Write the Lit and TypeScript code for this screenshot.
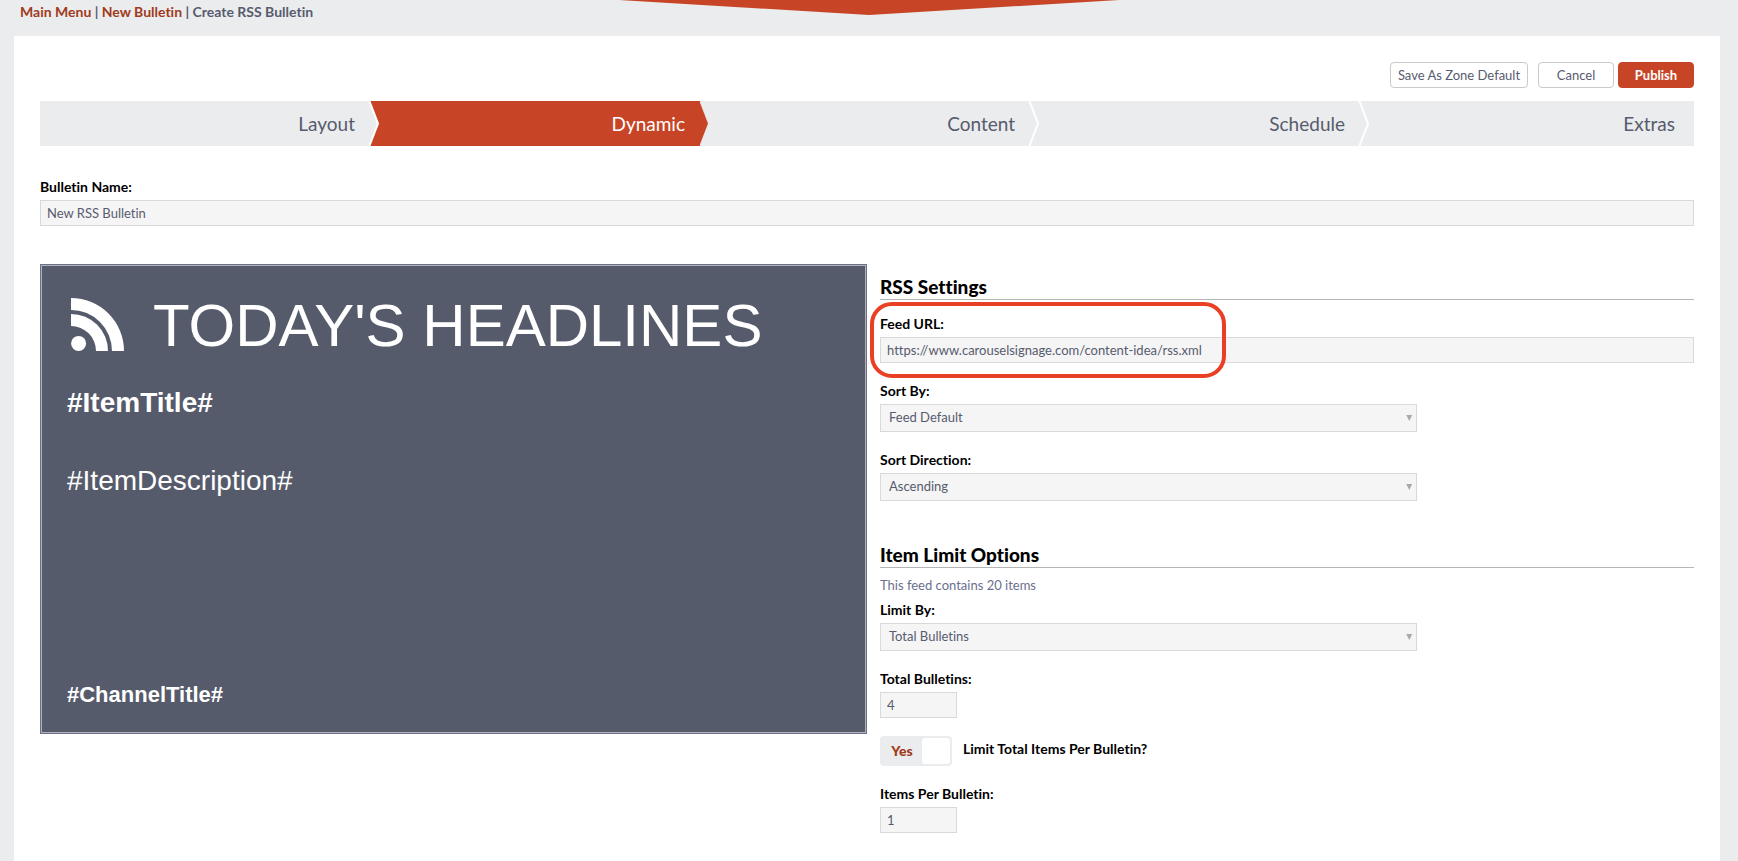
import { LitElement, html, css } from "lit";
import { customElement, property, state } from "lit/decorators.js";

@customElement("step-bar")
class StepBar extends LitElement {
  @property({ attribute: false }) steps: string[] = [];
  @property() current = "";

  static styles = css`
    :host {
      display: block;
    }
    .steps {
      display: flex;
      margin: 0;
      padding: 0;
      list-style: none;
      background: #ebeced;
    }
    .step {
      position: relative;
      display: flex;
      flex: 1 1 0;
    }
    .step:last-child {
      padding-right: 4px;
    }
    .link {
      flex: 1;
      padding-right: 15px;
      line-height: 45px;
      font-size: 19px;
      text-align: right;
      text-decoration: none;
      color: #575b6e;
    }
    .current {
      background: #c74526;
      color: #fff;
    }
    .arrow {
      position: absolute;
      left: 100%;
      top: 0;
      z-index: 1;
      width: 14px;
      height: 100%;
      margin-left: -4px;
      fill: #ebeced;
      stroke: #fff;
      stroke-width: 2;
    }
    .arrow.solid {
      fill: #c74526;
      stroke: none;
    }
  `;

  render() {
    return html`<ol class="steps">
      ${this.steps.map((name, i) => {
        const on = name === this.current;
        return html`<li class="step">
          <a class="link ${on ? "current" : ""}" href="#">${name}</a>
          ${i < this.steps.length - 1
            ? html`<svg class="arrow ${on ? "solid" : ""}" viewBox="-4 0 14 45" preserveAspectRatio="none" aria-hidden="true">
                <path d="M-1 -1L8 22.5L-1 46" />
              </svg>`
            : ""}
        </li>`;
      })}
    </ol>`;
  }
}

@customElement("bulletin-preview")
class BulletinPreview extends LitElement {
  static styles = css`
    :host {
      display: block;
    }
    .slide {
      box-sizing: border-box;
      display: flex;
      flex-direction: column;
      aspect-ratio: 827 / 470;
      padding: 24px;
      border: 1px solid #6b6f8e;
      box-shadow: inset 0 0 0 1px #b0b2b6;
      background: #565b6b;
      color: #fff;
      font-family: "Liberation Sans", Arial, sans-serif;
    }
    .head {
      display: flex;
      align-items: center;
      gap: 29px;
      padding-left: 6px;
    }
    .icon {
      flex: none;
      width: 53px;
      height: 53px;
      margin-bottom: 3px;
      fill: #fff;
    }
    .title {
      margin: 0;
      font-size: 60px;
      line-height: 74px;
      font-weight: 400;
      white-space: nowrap;
    }
    .line {
      margin: 0;
      padding-left: 2px;
      font-size: 28px;
      line-height: 32px;
    }
    .item {
      margin-top: 24px;
      font-weight: 700;
    }
    .description {
      margin-top: 46px;
    }
    .channel {
      margin-top: auto;
      font-size: 22px;
      line-height: 28px;
      font-weight: 700;
    }
  `;

  render() {
    return html`<section class="slide">
      <div class="head">
        <svg class="icon" viewBox="0 0 53 53" aria-hidden="true">
          <circle cx="7.6" cy="45.4" r="7.5" />
          <path d="M0 16A37 37 0 0 1 37 53H25A25 25 0 0 0 0 28Z" />
          <path d="M0 0A53 53 0 0 1 53 53H41A41 41 0 0 0 0 12Z" />
        </svg>
        <h1 class="title">TODAY'S HEADLINES</h1>
      </div>
      <p class="line item">#ItemTitle#</p>
      <p class="line description">#ItemDescription#</p>
      <p class="line channel">#ChannelTitle#</p>
    </section>`;
  }
}

@customElement("app-root")
class AppRoot extends LitElement {
  @state() limitItems = true;

  static styles = css`
    :host {
      display: flex;
      flex-direction: column;
      min-height: 100vh;
      background: #ebeced;
      color: #575b6e;
      font-family: Lato, sans-serif;
      font-size: 14px;
      line-height: 20px;
      font-variant-ligatures: none;
    }
    .top {
      position: relative;
      padding: 2px 20px 14px;
      font-weight: 700;
    }
    .crumb {
      color: #a03a20;
      text-decoration: none;
    }
    .tab {
      position: absolute;
      top: 0;
      left: 50%;
      margin-left: -250px;
      width: 500px;
      height: 15px;
      background: #c74526;
      clip-path: polygon(0 0, 100% 0, 50% 100%);
    }
    .panel {
      flex: 1;
      margin: 0 18px 0 14px;
      padding: 26px;
      background: #fff;
    }
    .actions {
      display: flex;
      justify-content: flex-end;
      gap: 4px;
      margin-bottom: 13px;
    }
    .button {
      box-sizing: border-box;
      height: 26px;
      min-width: 76px;
      padding: 0 6px 1px;
      border: 1px solid #c9cacc;
      border-radius: 4px;
      background: #fff;
      color: #575b6e;
      font: inherit;
      font-size: 13px;
      font-variant-ligatures: none;
    }
    .zone {
      min-width: 138px;
      margin-right: 6px;
    }
    .primary {
      border-color: #c74526;
      background: #c74526;
      color: #fff;
      font-weight: 700;
    }
    .name {
      margin: 31px 0 38px;
    }
    .columns {
      display: grid;
      grid-template-columns: minmax(0, 1fr) minmax(0, 1fr);
      align-items: start;
    }
    .settings {
      padding: 6px 0 0 13px;
    }
    .heading {
      box-sizing: border-box;
      height: 30px;
      margin: 0 0 14px;
      border-bottom: 1px solid #b4b5b7;
      color: #000;
      font-size: 19px;
      line-height: 33px;
      font-weight: 900;
    }
    .limits {
      margin: 37px 0 7px;
    }
    .note {
      margin: 0 0 5px;
      color: #6b6f8e;
      font-size: 13px;
    }
    .fields {
      display: flex;
      flex-direction: column;
      gap: 18px;
    }
    .field {
      position: relative;
      display: flex;
      flex-direction: column;
      align-items: flex-start;
      gap: 3px;
    }
    .label {
      color: #000;
      font-weight: 700;
    }
    .input,
    .select {
      box-sizing: border-box;
      width: 100%;
      height: 26px;
      margin: 0;
      padding: 0 6px 1px;
      border: 1px solid #d8d9da;
      border-radius: 0;
      background: #f5f5f5;
      color: #575b6e;
      font: inherit;
      font-size: 13px;
      font-variant-ligatures: none;
    }
    .short {
      width: 77px;
    }
    .drop {
      display: grid;
      align-items: center;
      width: 66%;
    }
    .select {
      grid-area: 1 / 1;
      height: 28px;
      padding: 0 8px 2px;
      appearance: none;
    }
    .caret {
      grid-area: 1 / 1;
      justify-self: end;
      width: 6px;
      height: 6px;
      margin-right: 5px;
      background: #a9a9a9;
      clip-path: polygon(0 0, 100% 0, 50% 100%);
      pointer-events: none;
    }
    .callout {
      position: absolute;
      left: -10px;
      top: -12px;
      box-sizing: border-box;
      width: 356px;
      height: 76px;
      border: 4px solid #e94025;
      border-radius: 22px;
      pointer-events: none;
    }
    .toggle {
      display: flex;
      align-items: flex-start;
      gap: 11px;
      color: #000;
      line-height: 26px;
      font-weight: 700;
    }
    .switch {
      position: relative;
      box-sizing: border-box;
      display: flex;
      align-items: center;
      width: 72px;
      height: 30px;
      padding: 2px;
      border-radius: 4px;
      background: #ebeced;
      color: #a03a20;
      font-weight: 900;
    }
    .check {
      position: absolute;
      inset: 0;
      width: 100%;
      height: 100%;
      margin: 0;
      opacity: 0;
    }
    .state {
      flex: 1;
      text-align: center;
    }
    .knob {
      width: 28px;
      height: 26px;
      border-radius: 3px;
      background: #fff;
    }
  `;

  private text(id: string, label: string, value: string, short = false) {
    return html`<label class="label" for=${id}>${label}</label>
      <input class="input ${short ? "short" : ""}" id=${id} type="text" .value=${value} />`;
  }

  private drop(id: string, label: string, options: string[]) {
    return html`<div class="field">
      <label class="label" for=${id}>${label}</label>
      <div class="drop">
        <select class="select" id=${id}>
          ${options.map((o) => html`<option>${o}</option>`)}
        </select>
        <span class="caret"></span>
      </div>
    </div>`;
  }

  render() {
    return html`
      <nav class="top">
        <span class="tab"></span>
        <a class="crumb" href="#">Main Menu</a> | <a class="crumb" href="#">New Bulletin</a> | Create RSS Bulletin
      </nav>
      <main class="panel">
        <div class="actions">
          <button class="button zone" type="button">Save As Zone Default</button>
          <button class="button" type="button">Cancel</button>
          <button class="button primary" type="button">Publish</button>
        </div>
        <step-bar .steps=${["Layout", "Dynamic", "Content", "Schedule", "Extras"]} current="Dynamic"></step-bar>
        <div class="field name">${this.text("name", "Bulletin Name:", "New RSS Bulletin")}</div>
        <div class="columns">
          <bulletin-preview></bulletin-preview>
          <div class="settings">
            <h2 class="heading">RSS Settings</h2>
            <div class="fields">
              <div class="field">
                ${this.text("feed", "Feed URL:", "https://www.carouselsignage.com/content-idea/rss.xml")}
                <span class="callout"></span>
              </div>
              ${this.drop("sort", "Sort By:", ["Feed Default"])}
              ${this.drop("direction", "Sort Direction:", ["Ascending"])}
            </div>
            <h2 class="heading limits">Item Limit Options</h2>
            <p class="note">This feed contains 20 items</p>
            <div class="fields">
              ${this.drop("limit", "Limit By:", ["Total Bulletins"])}
              <div class="field">${this.text("total", "Total Bulletins:", "4", true)}</div>
              <label class="toggle">
                <span class="switch">
                  <input
                    class="check"
                    type="checkbox"
                    .checked=${this.limitItems}
                    @change=${(e: Event) => (this.limitItems = (e.target as HTMLInputElement).checked)}
                  />
                  <span class="state">${this.limitItems ? "Yes" : "No"}</span>
                  <span class="knob"></span>
                </span>
                Limit Total Items Per Bulletin?
              </label>
              <div class="field">${this.text("items", "Items Per Bulletin:", "1", true)}</div>
            </div>
          </div>
        </div>
      </main>
    `;
  }
}
